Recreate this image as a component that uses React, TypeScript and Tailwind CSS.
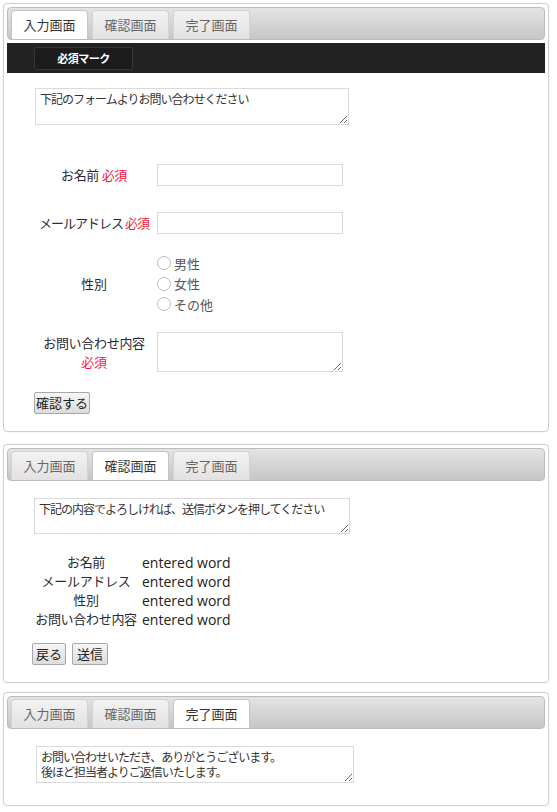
import React from "react";

const jp = "font-['Noto_Sans_CJK_JP','Noto_Sans',sans-serif]";

function TabBar({ active }: { active: number }) {
  const tabs = ["入力画面", "確認画面", "完了画面"];
  return (
    <div className="flex h-[33px] items-end gap-[4px] rounded-[4px] border border-[#bcbcbc] bg-gradient-to-b from-[#e4e4e4] to-[#c6c6c6] px-[3px]">
      {tabs.map((t, i) => (
        <div
          key={t}
          className={
            "flex h-[29px] w-[77px] items-center justify-center rounded-t-[4px] border border-b-0 text-[13px] " +
            (i === active
              ? "border-[#c5c5c5] bg-white text-[#333]"
              : "border-[#d3d3d3] bg-gradient-to-b from-[#f2f2f2] to-[#e2e2e2] text-[#666]")
          }
        >
          {t}
        </div>
      ))}
    </div>
  );
}

function Panel({ active, className, children }: { active: number; className?: string; children: React.ReactNode }) {
  return (
    <div className={"w-[546px] rounded-[4px] border border-[#cfcfcf] p-[3px] shadow-[0_0_2px_rgba(0,0,0,0.08)] " + (className || "")}>
      <TabBar active={active} />
      {children}
    </div>
  );
}

function Note({ text, className }: { text: string; className: string }) {
  return (
    <textarea
      readOnly
      defaultValue={text}
      className={"block border border-[#d9d9d9] px-[4px] py-[2px] text-[12px] leading-[15px] tracking-[-1px] text-[#333] outline-none " + jp + " " + className}
    />
  );
}

const Req = () => <span className="text-[#f5143c]">必須</span>;

function Radio({ label }: { label: string }) {
  return (
    <div className="flex h-[20.5px] items-center gap-[3px]">
      <span className="h-[14px] w-[14px] rounded-full border border-[#bdbdbd] bg-white" />
      <span className="text-[13px] text-[#555]">{label}</span>
    </div>
  );
}

function Btn({ children, className }: { children: React.ReactNode; className: string }) {
  return (
    <button className={"flex h-[22px] items-center justify-center rounded-[2px] border border-[#a8a8a8] bg-gradient-to-b from-[#f6f6f6] to-[#dcdcdc] text-[13px] text-[#222] " + className}>
      {children}
    </button>
  );
}

export default function App() {
  const rows = ["お名前", "メールアドレス", "性別", "お問い合わせ内容"];
  return (
    <div className={"min-h-screen bg-white pl-[3px] pt-[3px] " + jp}>
      <Panel active={0}>
        <div className="mt-[3px] h-[30px] bg-[#222] pt-[4px] pl-[27px]">
          <div className="flex h-[23px] w-[99px] items-center justify-center rounded-[2px] border border-[#363636] bg-[#1c1c1c] text-[11px] font-bold tracking-[-0.5px] text-white">
            必須マーク
          </div>
        </div>
        <div className="pl-[28px] pb-[14px] text-[13px] text-[#2b2b35]">
          <Note text="下記のフォームよりお問い合わせください" className="mt-[15px] h-[37px] w-[314px]" />
          <div className="ml-[-1px] mt-[39px] flex items-center">
            <div className="w-[120px] text-center tracking-[-0.3px]">お名前 <Req /></div>
            <div className="ml-[3px] h-[22px] w-[186px] border border-[#d9d9d9]" />
          </div>
          <div className="ml-[-1px] mt-[26px] flex items-center">
            <div className="w-[120px] whitespace-nowrap text-center tracking-[-1px]">メールアドレス <Req /></div>
            <div className="ml-[3px] h-[22px] w-[186px] border border-[#d9d9d9]" />
          </div>
          <div className="ml-[-1px] mt-[19px] flex items-center">
            <div className="w-[120px] text-center">性別</div>
            <div className="ml-[3px] flex flex-col">
              <Radio label="男性" />
              <Radio label="女性" />
              <Radio label="その他" />
            </div>
          </div>
          <div className="ml-[-1px] mt-[17px] flex items-center">
            <div className="flex w-[120px] flex-col items-center tracking-[-0.3px]">
              <div className="h-[19px] leading-[19px]">お問い合わせ内容</div>
              <div className="h-[19px] leading-[19px]">
                <Req />
              </div>
            </div>
            <textarea readOnly className="ml-[3px] block h-[40px] w-[186px] border border-[#d9d9d9] outline-none" />
          </div>
          <Btn className="ml-[-1px] mt-[20px] h-[21px] w-[56px]">確認する</Btn>
        </div>
      </Panel>

      <Panel active={1} className="mt-[12px]">
        <div className="pl-[27px] pb-[14px]">
          <Note text="下記の内容でよろしければ、送信ボタンを押してください" className="mt-[17px] h-[36px] w-[316px]" />
          <div className="mt-[19px] flex flex-col">
            {rows.map((r) => (
              <div key={r} className="flex h-[19px] items-center">
                <div className="w-[104px] whitespace-nowrap text-center text-[13px] tracking-[-0.3px] text-[#2b2b35]">{r}</div>
                <div className="ml-[4px] font-['Open_Sans','Noto_Sans',sans-serif] text-[14px] text-[#222]">entered word</div>
              </div>
            ))}
          </div>
          <div className="ml-[-2px] mt-[14px] flex gap-[6px]">
            <Btn className="w-[34px]">戻る</Btn>
            <Btn className="w-[36px]">送信</Btn>
          </div>
        </div>
      </Panel>

      <Panel active={2} className="mt-[9px]">
        <div className="pl-[29px] pb-[19px]">
          <Note
            text={"お問い合わせいただき、ありがとうございます。\n後ほど担当者よりご返信いたします。"}
            className="mt-[17px] h-[37px] w-[318px]"
          />
        </div>
      </Panel>
    </div>
  );
}
